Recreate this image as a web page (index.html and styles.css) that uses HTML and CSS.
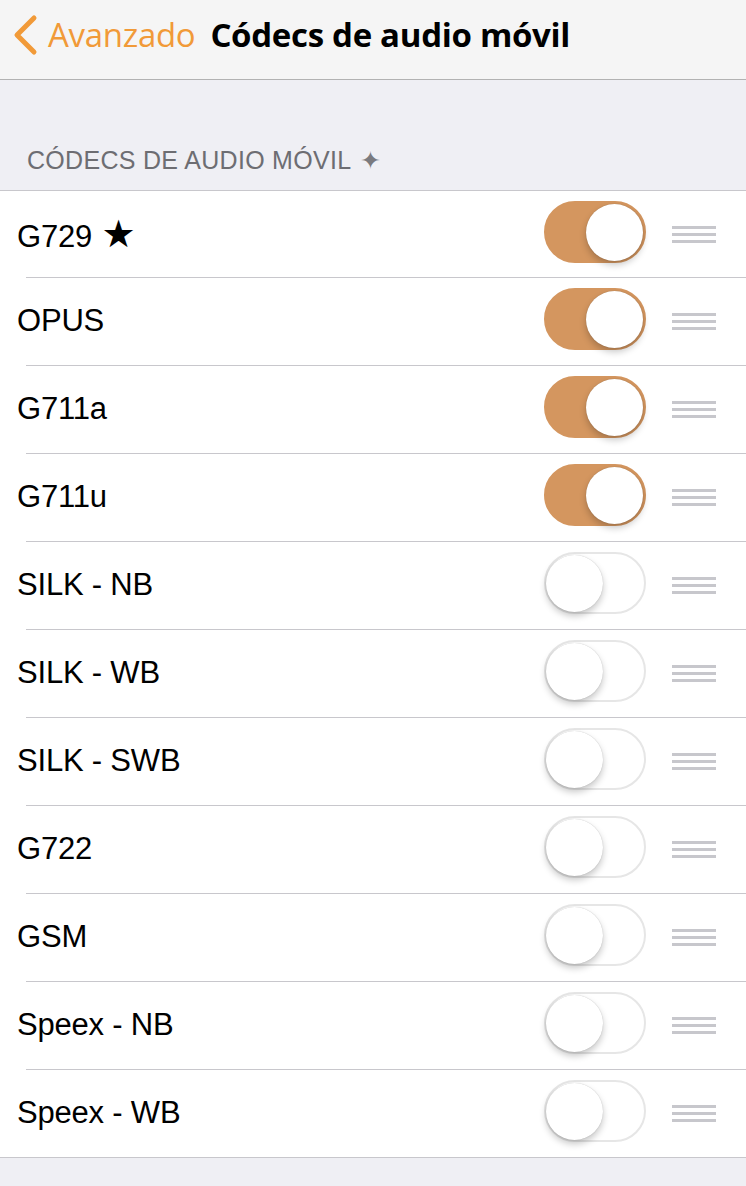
FILE: index.html
```html
<!DOCTYPE html>
<html lang="es">
<head>
<meta charset="utf-8">
<link rel="stylesheet" href="styles.css">
</head>
<body>
<header class="nav">
  <div class="back">
    <svg class="chev" width="26" height="42" viewBox="0 0 26 42"><path d="M22 4 L5 21 L22 38" fill="none" stroke="#f19a38" stroke-width="5" stroke-linecap="round" stroke-linejoin="round"/></svg>
    <span class="back-label">Avanzado</span>
  </div>
  <h1 class="title">Códecs de audio móvil</h1>
</header>
<div class="section-head">CÓDECS DE AUDIO MÓVIL <span class="spark">✦</span></div>
<ul class="list">
  <li class="row"><span class="name">G729 <span class="star">★</span></span><span class="toggle on"><span class="knob"></span></span><span class="grip"><i></i><i></i><i></i></span></li>
  <li class="row"><span class="name">OPUS</span><span class="toggle on"><span class="knob"></span></span><span class="grip"><i></i><i></i><i></i></span></li>
  <li class="row"><span class="name">G711a</span><span class="toggle on"><span class="knob"></span></span><span class="grip"><i></i><i></i><i></i></span></li>
  <li class="row"><span class="name">G711u</span><span class="toggle on"><span class="knob"></span></span><span class="grip"><i></i><i></i><i></i></span></li>
  <li class="row"><span class="name">SILK - NB</span><span class="toggle"><span class="knob"></span></span><span class="grip"><i></i><i></i><i></i></span></li>
  <li class="row"><span class="name">SILK - WB</span><span class="toggle"><span class="knob"></span></span><span class="grip"><i></i><i></i><i></i></span></li>
  <li class="row"><span class="name">SILK - SWB</span><span class="toggle"><span class="knob"></span></span><span class="grip"><i></i><i></i><i></i></span></li>
  <li class="row"><span class="name">G722</span><span class="toggle"><span class="knob"></span></span><span class="grip"><i></i><i></i><i></i></span></li>
  <li class="row"><span class="name">GSM</span><span class="toggle"><span class="knob"></span></span><span class="grip"><i></i><i></i><i></i></span></li>
  <li class="row"><span class="name">Speex - NB</span><span class="toggle"><span class="knob"></span></span><span class="grip"><i></i><i></i><i></i></span></li>
  <li class="row"><span class="name">Speex - WB</span><span class="toggle"><span class="knob"></span></span><span class="grip"><i></i><i></i><i></i></span></li>
</ul>
</body>
</html>
```
FILE: styles.css
```css
* { box-sizing: border-box; }
html, body { margin: 0; padding: 0; }
body {
  background: #efeff4;
  font-family: "Liberation Sans", Arial, sans-serif;
  width: 746px;
  height: 1186px;
  overflow: hidden;
}
.nav {
  height: 80px;
  background: #f5f5f5;
  border-bottom: 1px solid #b2b2b2;
  display: flex;
  align-items: center;
  padding: 0 0 10px 12px;
}
.back { display: flex; align-items: center; }
.chev { display: block; margin-right: 10px; }
.back-label {
  color: #f19a38;
  font-size: 33px;
  font-family: "Open Sans", "Liberation Sans", sans-serif;
  letter-spacing: -0.3px;
}
.title {
  margin: 0 0 0 15px;
  font-size: 33px;
  font-weight: bold;
  color: #000;
  font-family: "Open Sans", "Liberation Sans", sans-serif;
  letter-spacing: -0.3px;
}
.section-head {
  height: 110px;
  display: flex;
  align-items: flex-end;
  padding: 0 0 15px 27px;
  color: #6d6d72;
  font-size: 25px;
  letter-spacing: 0.3px;
}
.spark { margin-left: 9px; font-size: 25px; color: #7a7a7f; }
.list {
  list-style: none;
  margin: 0;
  padding: 0;
  background: #fff;
  border-bottom: 1px solid #c8c7cc;
}
.row {
  height: 88px;
  display: flex;
  align-items: center;
  padding-left: 17px;
  position: relative;
}
.row:first-child { border-top: 1px solid #c8c7cc; height: 87px; }
.row + .row::before {
  content: "";
  position: absolute;
  left: 26px;
  right: 0;
  top: 0;
  height: 1px;
  background: #c8c7cc;
}
.name {
  flex: 1;
  font-size: 31px;
  color: #000;
  letter-spacing: -0.2px;
}
.star { font-size: 38px; font-family: "DejaVu Sans", sans-serif; margin-left: 1px; }
.toggle {
  width: 102px;
  height: 62px;
  border-radius: 31px;
  background: #fff;
  border: 2px solid #e6e6e6;
  position: relative;
  margin-right: 26px;
  margin-bottom: 4px;
}
.toggle.on { background: #d4965f; border-color: #d4965f; }
.knob {
  position: absolute;
  top: 1px;
  left: 0;
  width: 57px;
  height: 57px;
  border-radius: 50%;
  background: #fff;
  box-shadow: 0 4px 7px rgba(0,0,0,0.22), 0 0 1px rgba(0,0,0,0.25);
}
.toggle.on .knob { left: auto; right: 1px; }
.grip {
  width: 44px;
  margin-right: 30px;
  display: flex;
  flex-direction: column;
  gap: 4px;
}
.grip i { display: block; height: 3px; background: #c7c7cc; }
```
